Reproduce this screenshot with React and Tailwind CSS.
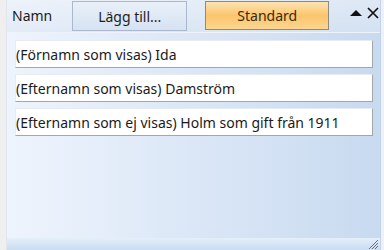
import React from "react";

const rows = [
  "(Förnamn som visas) Ida",
  "(Efternamn som visas) Damström",
  "(Efternamn som ej visas) Holm som gift från 1911",
];

const font = { fontFamily: '"Segoe UI", "Noto Sans", "Open Sans", sans-serif' };

const App = () => {
  return (
    <div
      className="w-[384px] h-[250px] flex bg-[#f0f0f0] overflow-hidden text-[#1b1b1b]"
      style={font}
    >
      <div className="w-[7px] bg-[#efefef] border-r border-[#e2e6ec]" />
      <div className="flex-1 flex flex-col bg-gradient-to-r from-[#eef4fd] to-[#c8daf0]">
        {/* header */}
        <div className="h-[33px] flex items-start border-b border-[#eef3fa] bg-gradient-to-b from-[#edf2f9]/60 to-[#dbe6f3]/60">
          <span className="ml-[5px] mt-[6px] text-[14px] leading-[19px]">Namn</span>
          <button className="ml-[20px] mt-[1px] w-[115px] h-[30px] border border-[#a9b8cc] bg-gradient-to-b from-[#e9f0f9] to-[#d6e3f3] text-[14px] text-[#1e1e1e]">
            Lägg till...
          </button>
          <button className="ml-[18px] mt-[1px] w-[124px] h-[29px] border border-[#8f8a80] bg-gradient-to-b from-[#fde3b2] via-[#fcc56c] to-[#fdd690] text-[14px] text-[#3a2a14]">
            Standard
          </button>
          <div className="ml-auto mr-[1px] mt-[7px] flex items-center gap-[5px]">
            <svg width="12" height="6" viewBox="0 0 12 6">
              <polygon points="0,6 6,0 12,6" fill="#111" />
            </svg>
            <svg width="12" height="12" viewBox="0 0 12 12">
              <path d="M1 1 L11 11 M11 1 L1 11" stroke="#111" strokeWidth="1.7" />
            </svg>
          </div>
        </div>
        {/* rows */}
        <div className="flex flex-col gap-[6px] pl-[8px] pr-[7px] pt-[7px]">
          {rows.map((r, i) => (
            <div
              key={i}
              className="h-[28px] bg-white border-t border-l border-[#e8ecf1] border-r-[1.5px] border-b-[1.5px] border-r-[#a3a6aa] border-b-[#a3a6aa] flex items-center pt-[1px] text-[14px]"
            >
              {r}
            </div>
          ))}
        </div>
        <div className="flex-1" />
        {/* status bar */}
        <div className="h-[12px] bg-gradient-to-b from-[#e4effb] to-[#c9dcf1] flex justify-end items-end">
          <svg width="10" height="10" viewBox="0 0 10 10" className="mr-[1px]">
            <path d="M9 3 L3 9 M9 6 L6 9 M9 0 L0 9" stroke="#6b6f75" strokeWidth="1" />
          </svg>
        </div>
      </div>
      <div className="w-[4px] bg-[#eef1f5] border-l border-[#c2d3e8]" />
    </div>
  );
};

export default App;
